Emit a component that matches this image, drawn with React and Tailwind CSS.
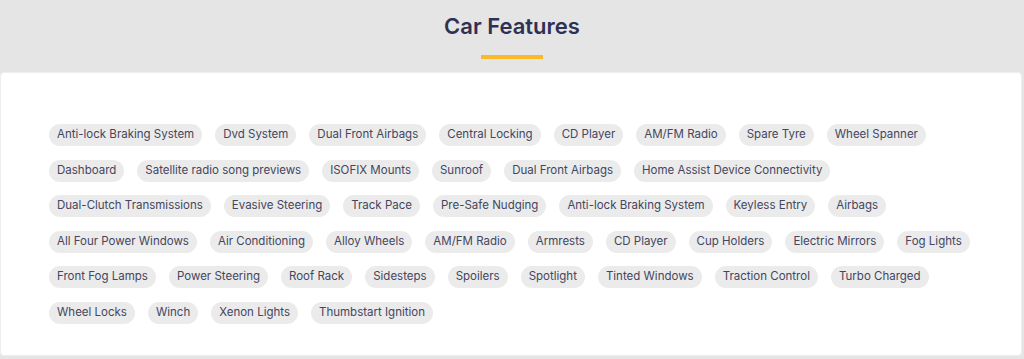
const features = [
  'Anti-lock Braking System', 'Dvd System', 'Dual Front Airbags', 'Central Locking', 'CD Player',
  'AM/FM Radio', 'Spare Tyre', 'Wheel Spanner', 'Dashboard', 'Satellite radio song previews',
  'ISOFIX Mounts', 'Sunroof', 'Dual Front Airbags', 'Home Assist Device Connectivity',
  'Dual-Clutch Transmissions', 'Evasive Steering', 'Track Pace', 'Pre-Safe Nudging',
  'Anti-lock Braking System', 'Keyless Entry', 'Airbags', 'All Four Power Windows',
  'Air Conditioning', 'Alloy Wheels', 'AM/FM Radio', 'Armrests', 'CD Player', 'Cup Holders',
  'Electric Mirrors', 'Fog Lights', 'Front Fog Lamps', 'Power Steering', 'Roof Rack',
  'Sidesteps', 'Spoilers', 'Spotlight', 'Tinted Windows', 'Traction Control', 'Turbo Charged',
  'Wheel Locks', 'Winch', 'Xenon Lights', 'Thumbstart Ignition',
]

export default function App() {
  return (
    <div className="w-[1024px] h-[359px] bg-[#e5e5e5] font-['Inter',sans-serif] overflow-hidden">
      <div className="flex flex-col items-center h-[72px] pt-[12px]">
        <h2 className="text-[22px] leading-[28px] font-semibold text-[#2e3153]">Car Features</h2>
        <div className="mt-[15px] w-[62px] h-[4px] bg-[#fbb829]" />
      </div>
      <div className="w-[1022px] h-[284px] bg-white rounded-[4px] border border-[#eeeeee] pt-[51px] pl-[48px] pr-[30px]">
        <div className="flex flex-wrap gap-x-[13px] gap-y-[13.5px]">
          {features.map((f, i) => (
            <span
              key={i}
              className="h-[22px] flex items-center px-[8px] rounded-full bg-[#ebebeb] text-[11.5px] text-[#44465f] whitespace-nowrap"
            >
              {f}
            </span>
          ))}
        </div>
      </div>
    </div>
  )
}
